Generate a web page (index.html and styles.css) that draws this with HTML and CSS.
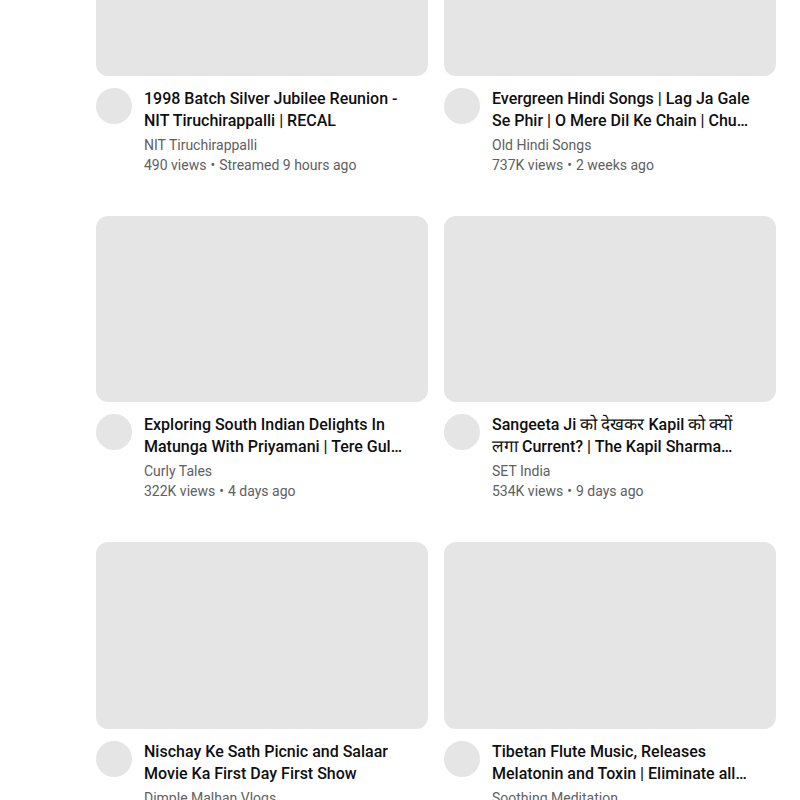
FILE: index.html
```html
<!DOCTYPE html>
<html lang="en">
<head>
<meta charset="utf-8">
<meta name="viewport" content="width=device-width, initial-scale=1">
<title>Videos</title>
<link rel="stylesheet" href="styles.css">
</head>
<body>
<main class="feed">
  <article class="video">
    <a class="thumb thumb-cut" href="#"></a>
    <div class="details">
      <a class="avatar" href="#"></a>
      <div class="meta">
        <h3 class="title"><a href="#">1998 Batch Silver Jubilee Reunion - NIT Tiruchirappalli | RECAL</a></h3>
        <a class="channel" href="#">NIT Tiruchirappalli</a>
        <p class="stats"><span>490 views</span><span>Streamed 9 hours ago</span></p>
      </div>
    </div>
  </article>
  <article class="video">
    <a class="thumb thumb-cut" href="#"></a>
    <div class="details">
      <a class="avatar" href="#"></a>
      <div class="meta">
        <h3 class="title"><a href="#">Evergreen Hindi Songs | Lag Ja Gale Se Phir | O Mere Dil Ke Chain | Chu…</a></h3>
        <a class="channel" href="#">Old Hindi Songs</a>
        <p class="stats"><span>737K views</span><span>2 weeks ago</span></p>
      </div>
    </div>
  </article>
  <article class="video">
    <a class="thumb" href="#"></a>
    <div class="details">
      <a class="avatar" href="#"></a>
      <div class="meta">
        <h3 class="title"><a href="#">Exploring South Indian Delights In Matunga With Priyamani | Tere Gul…</a></h3>
        <a class="channel" href="#">Curly Tales</a>
        <p class="stats"><span>322K views</span><span>4 days ago</span></p>
      </div>
    </div>
  </article>
  <article class="video">
    <a class="thumb" href="#"></a>
    <div class="details">
      <a class="avatar" href="#"></a>
      <div class="meta">
        <h3 class="title"><a href="#">Sangeeta Ji <span class="hindi" lang="hi">को देखकर</span> Kapil <span class="hindi" lang="hi">को क्यों लगा</span> Current? | The Kapil Sharma…</a></h3>
        <a class="channel" href="#">SET India</a>
        <p class="stats"><span>534K views</span><span>9 days ago</span></p>
      </div>
    </div>
  </article>
  <article class="video">
    <a class="thumb" href="#"></a>
    <div class="details">
      <a class="avatar" href="#"></a>
      <div class="meta">
        <h3 class="title"><a href="#">Nischay Ke Sath Picnic and Salaar Movie Ka First Day First Show</a></h3>
        <a class="channel" href="#">Dimple Malhan Vlogs</a>
      </div>
    </div>
  </article>
  <article class="video">
    <a class="thumb" href="#"></a>
    <div class="details">
      <a class="avatar" href="#"></a>
      <div class="meta">
        <h3 class="title"><a href="#">Tibetan Flute Music, Releases Melatonin and Toxin | Eliminate all…</a></h3>
        <a class="channel" href="#">Soothing Meditation</a>
      </div>
    </div>
  </article>
</main>
</body>
</html>
```
FILE: styles.css
```css
* {
  box-sizing: border-box;
}

body {
  margin: 0;
  height: 100vh;
  overflow: hidden;
  background: #fff;
  color: #0f0f0f;
  font-family: Roboto, Arial, sans-serif;
}

a {
  color: inherit;
  text-decoration: none;
}

.feed {
  display: grid;
  grid-template-columns: repeat(2, minmax(0, 1fr));
  gap: 41px 16px;
  padding: 0 24px 0 96px;
}

.thumb {
  display: block;
  aspect-ratio: 16 / 9;
  border-radius: 12px;
  background: #e5e5e5;
}

/* The first row is scrolled partly out of view. */
.thumb-cut {
  aspect-ratio: 101 / 23;
  border-radius: 0 0 12px 12px;
}

.details {
  display: flex;
  gap: 12px;
  padding-top: 12px;
}

.avatar {
  flex: none;
  width: 36px;
  height: 36px;
  border-radius: 50%;
  background: #e5e5e5;
}

.meta {
  flex: 1;
  min-width: 0;
  padding-right: 24px;
  color: #606060;
  font-size: 14px;
  line-height: 20px;
}

.title {
  margin: 0 0 3px;
  color: #0f0f0f;
  font-size: 16px;
  font-weight: 500;
  line-height: 22px;
}

.hindi {
  font-size: 17px;
  font-weight: 300;
  line-height: 1;
}

.channel {
  display: block;
}

.stats {
  margin: 0;
}

.stats span + span::before {
  content: "•";
  margin: 0 4px;
}
```
